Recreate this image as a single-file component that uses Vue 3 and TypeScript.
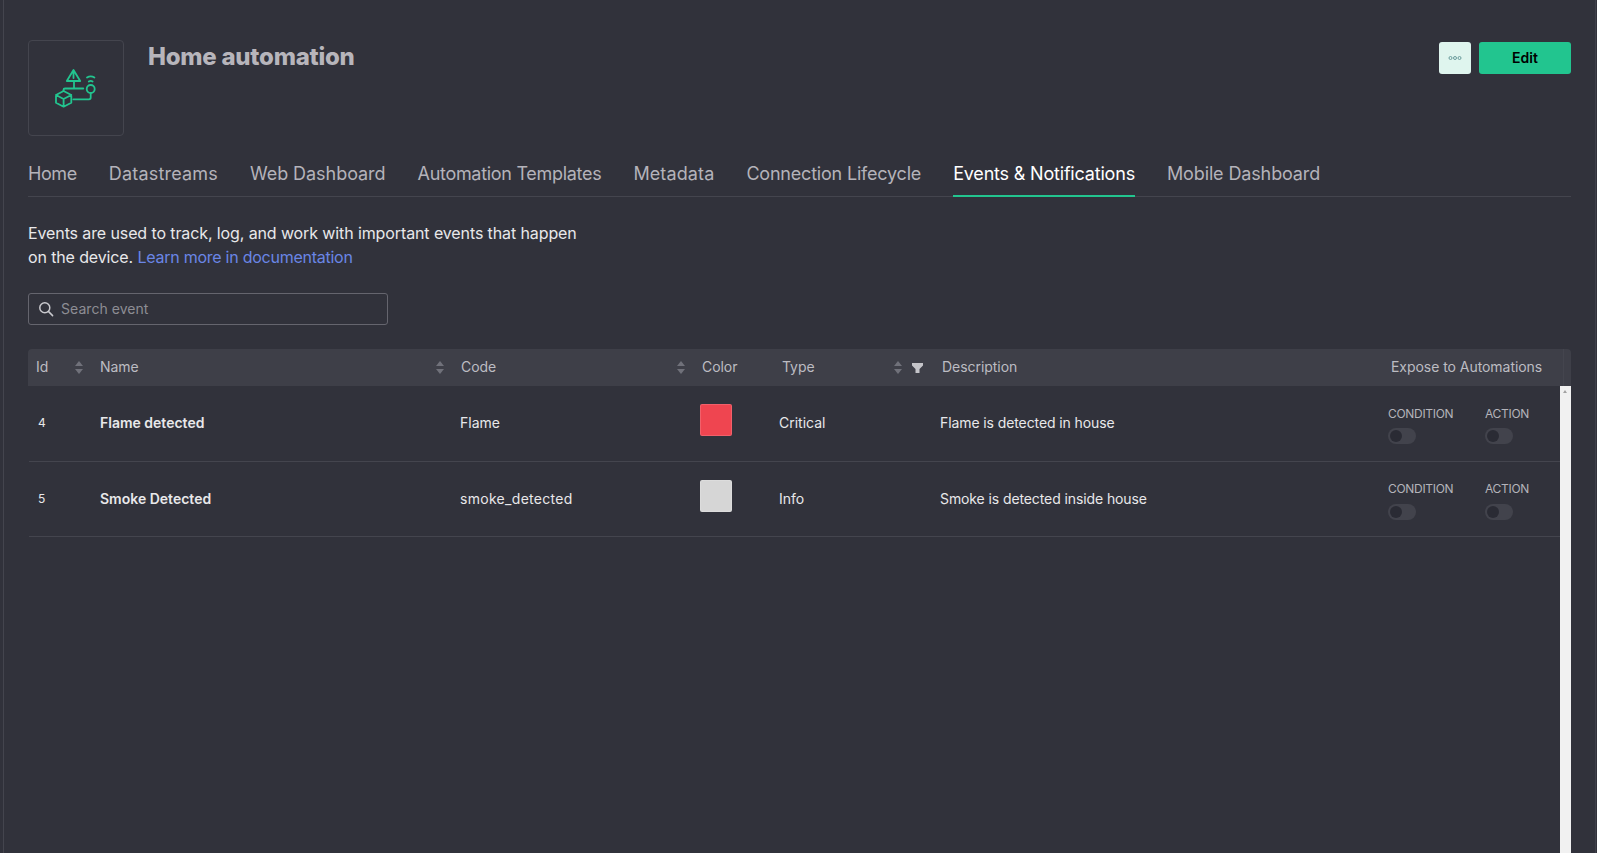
<script setup lang="ts">
interface EventRow {
  id: number
  name: string
  code: string
  codeSpacing: number
  color: string
  type: string
  description: string
}

interface Tab {
  label: string
  spacing: number
}

const tabs: Tab[] = [
  { label: 'Home', spacing: -0.4 },
  { label: 'Datastreams', spacing: 0.18 },
  { label: 'Web Dashboard', spacing: -0.05 },
  { label: 'Automation Templates', spacing: -0.3 },
  { label: 'Metadata', spacing: 0.12 },
  { label: 'Connection Lifecycle', spacing: -0.2 },
  { label: 'Events & Notifications', spacing: -0.19 },
  { label: 'Mobile Dashboard', spacing: -0.13 },
]

const rows: EventRow[] = [
  { id: 4, name: 'Flame detected', code: 'Flame', codeSpacing: 0, color: '#ef4550', type: 'Critical', description: 'Flame is detected in house' },
  { id: 5, name: 'Smoke Detected', code: 'smoke_detected', codeSpacing: 0.3, color: '#d6d6d6', type: 'Info', description: 'Smoke is detected inside house' },
]
</script>

<template>
  <div class="page">
    <div class="content">
      <header class="top">
        <div class="logo-box">
          <svg width="48" height="48" viewBox="0 0 48 48" fill="none" stroke="#22c58f" stroke-width="1.8" stroke-linecap="round" stroke-linejoin="round">
            <path d="M21.5 6 L14.8 17 H28.2 Z M21.5 9 V14 M22 17 V24" />
            <path d="M35 13.5 q3.7 -2.4 7.4 0 M36.8 17.5 q1.9 -1.2 3.8 0" />
            <circle cx="38.7" cy="25" r="4" />
            <path d="M31.3 24.5 H13 q-1.5 0 -1.5 1.5 V27" />
            <path d="M11.6 27 L19.3 31 V38.7 L11.6 42.7 L4 38.7 V31 Z M4 31 L11.6 35 L19.3 31 M11.6 35 V42.7" />
            <path d="M21.3 35.3 H37 q1.7 0 1.7 -1.7 V29" />
          </svg>
        </div>
        <h1 class="title">Home automation</h1>
        <div class="actions">
          <button class="btn-more" type="button">
            <svg width="14" height="4" viewBox="0 0 14 4" fill="none" stroke="#6b9c9c" stroke-width="1">
              <circle cx="2.5" cy="2" r="1.5" />
              <circle cx="7" cy="2" r="1.5" />
              <circle cx="11.5" cy="2" r="1.5" />
            </svg>
          </button>
          <button class="btn-edit" type="button">Edit</button>
        </div>
      </header>

      <nav class="tabs">
        <span
          v-for="tab in tabs"
          :key="tab.label"
          class="tab"
          :class="{ active: tab.label === 'Events & Notifications' }"
          :style="{ letterSpacing: tab.spacing + 'px' }"
        >{{ tab.label }}</span>
      </nav>

      <p class="intro">
        <span class="line-one">Events are used to track, log, and work with important events that happen</span><br />
        <span class="line-two">on the device. </span><a class="link">Learn more in documentation</a>
      </p>

      <div class="search">
        <svg width="16" height="16" viewBox="0 0 16 16" fill="none" stroke="#c9c9ce" stroke-width="1.5" stroke-linecap="round">
          <circle cx="6.8" cy="6.8" r="5" />
          <path d="M10.6 10.6 L14.6 14.6" />
        </svg>
        <span class="placeholder">Search event</span>
      </div>

      <div class="table">
        <div class="thead">
          <div class="th th-sort"><span>Id</span><i class="sort" /></div>
          <div class="th th-sort"><span>Name</span><i class="sort" /></div>
          <div class="th th-sort"><span>Code</span><i class="sort" /></div>
          <div class="th"><span>Color</span></div>
          <div class="th th-sort">
            <span>Type</span>
            <span class="type-icons">
              <i class="sort" />
              <svg class="filter" width="11" height="10" viewBox="0 0 11 10" fill="#c4c4c9"><path d="M0 0 H11 V2.5 L7.5 6 V10 H3.5 V6 L0 2.5 Z" /></svg>
            </span>
          </div>
          <div class="th"><span>Description</span></div>
          <div class="th th-last"><span>Expose to Automations</span></div>
          <div class="th-gap" />
        </div>

        <div class="tbody">
          <div class="rows">
            <div v-for="row in rows" :key="row.id" class="tr">
              <div class="td td-id">{{ row.id }}</div>
              <div class="td td-name">{{ row.name }}</div>
              <div class="td" :style="{ letterSpacing: row.codeSpacing + 'px' }">{{ row.code }}</div>
              <div class="td td-color"><span class="swatch" :style="{ background: row.color }" /></div>
              <div class="td">{{ row.type }}</div>
              <div class="td td-desc">{{ row.description }}</div>
              <div class="td-expose">
                <div class="expose-item">
                  <span class="expose-label">CONDITION</span>
                  <span class="toggle"><span class="knob" /></span>
                </div>
                <div class="expose-item">
                  <span class="expose-label">ACTION</span>
                  <span class="toggle"><span class="knob" /></span>
                </div>
              </div>
            </div>
          </div>
          <div class="scrollbar"><span class="arrow" /></div>
        </div>
      </div>
    </div>
  </div>
</template>

<style>
html,
body {
  margin: 0;
  background: #31323b;
  overflow: hidden;
}
</style>

<style scoped>
.page {
  height: 853px;
  box-sizing: border-box;
  overflow: hidden;
  background: #31323b;
  font-family: Inter, "Liberation Sans", sans-serif;
  color: #e8e8ea;
  padding: 40px 24px 0 24px;
  border-left: 1px solid #44454e;
  border-right: 1px solid #3f404a;
  margin: 0 1px 0 3px;
  display: flex;
  flex-direction: column;
}

.content {
  flex: 1;
  min-height: 0;
  display: flex;
  flex-direction: column;
}

.top {
  display: flex;
  align-items: flex-start;
}

.logo-box {
  width: 96px;
  height: 96px;
  box-sizing: border-box;
  border: 1px solid #44454e;
  border-radius: 4px;
  display: flex;
  align-items: center;
  justify-content: center;
}

.title {
  margin: 1px 0 0 24px;
  font-size: 24px;
  line-height: 32px;
  font-weight: 800;
  letter-spacing: -0.25px;
  color: #b7b5bb;
}

.actions {
  margin-left: auto;
  margin-top: 2px;
  display: flex;
  gap: 8px;
}

.btn-more,
.btn-edit {
  height: 32px;
  border: 0;
  border-radius: 3px;
  padding: 0;
  font-family: inherit;
  display: flex;
  align-items: center;
  justify-content: center;
}

.btn-more {
  width: 32px;
  background: #dff5ee;
}

.btn-edit {
  width: 92px;
  background: #22c58f;
  color: #000;
  font-size: 14px;
  font-weight: 600;
  padding-bottom: 1px;
}

.tabs {
  margin-top: 22px;
  display: flex;
  gap: 32px;
  border-bottom: 1px solid #44454e;
  height: 38px;
}

.tab {
  font-size: 18px;
  line-height: 32px;
  color: #b4b3ba;
  height: 39px;
  box-sizing: border-box;
  white-space: nowrap;
}

.tab.active {
  color: #fff;
  border-bottom: 2px solid #22c58f;
}

.intro {
  margin: 24px 0 0;
  font-size: 16px;
  line-height: 24px;
  color: #e8e8ea;
}

.line-one {
  letter-spacing: -0.11px;
}

.line-two {
  letter-spacing: -0.13px;
}

.link {
  color: #6a86e6;
  letter-spacing: -0.25px;
}

.search {
  margin-top: 24px;
  width: 360px;
  height: 32px;
  box-sizing: border-box;
  border: 1px solid #65656e;
  border-radius: 3px;
  display: flex;
  align-items: center;
  gap: 7px;
  padding-left: 9px;
}

.placeholder {
  font-size: 14px;
  color: #8d8d94;
  padding-bottom: 2px;
  letter-spacing: 0.05px;
}

.table {
  margin-top: 24px;
  flex: 1;
  min-height: 0;
  display: flex;
  flex-direction: column;
}

.thead {
  height: 37px;
  flex: none;
  background: #3e3f48;
  border-radius: 4px 4px 0 0;
  display: grid;
  grid-template-columns: 64px 361px 241px 80px 160px 1fr 180px 8px;
  font-size: 14px;
  letter-spacing: -0.05px;
  color: #bcbcc2;
}

.th {
  display: flex;
  align-items: center;
  padding: 0 8px 2px;
  min-width: 0;
}

.th-sort {
  justify-content: space-between;
}

.th-last {
  white-space: nowrap;
  padding-right: 0;
}

.th-gap {
  border-left: 1px solid #44454e;
}

.type-icons {
  display: flex;
  align-items: center;
  gap: 10px;
  margin-right: 3px;
}

.filter {
  margin-top: 2px;
}

.sort {
  width: 8px;
  height: 13px;
  position: relative;
  display: block;
  margin: 2px 1px 0 0;
}

.type-icons .sort {
  margin-right: 0;
}

.sort::before,
.sort::after {
  content: "";
  position: absolute;
  left: 0;
  border-left: 4px solid transparent;
  border-right: 4px solid transparent;
}

.sort::before {
  top: 0;
  border-bottom: 5.5px solid #70717a;
}

.sort::after {
  bottom: 0;
  border-top: 5.5px solid #70717a;
}

.tbody {
  flex: 1;
  min-height: 0;
  display: flex;
}

.rows {
  flex: 1;
  min-width: 0;
}

.tr {
  height: 76px;
  box-sizing: border-box;
  padding-bottom: 3px;
  border-bottom: 1px solid #44454e;
  margin-left: 1px;
  display: grid;
  grid-template-columns: 63px 360px 241px 78px 161px 1fr 172px;
  align-items: center;
  font-size: 14px;
  color: #e8e8ea;
}

.tr:last-child {
  height: 75px;
  padding-bottom: 2px;
}

.td {
  padding: 0 8px;
  white-space: nowrap;
}

.td-id {
  font-size: 12px;
  padding-left: 9px;
}

.td-name {
  font-weight: 600;
}

.td-desc {
  letter-spacing: -0.1px;
}

.td-color {
  padding-left: 7px;
  padding-bottom: 4px;
}

.swatch {
  display: block;
  width: 32px;
  height: 32px;
  box-sizing: border-box;
  border-radius: 2px;
  border: 1px solid rgba(255, 255, 255, 0.15);
}

.td-expose {
  display: grid;
  grid-template-columns: 97px 1fr;
  align-self: start;
  padding-top: 19px;
}

.tr:first-child .td-expose {
  padding-top: 20px;
}

.tr:first-child .expose-item {
  gap: 6px;
}

.expose-item {
  display: flex;
  flex-direction: column;
  gap: 7px;
}

.expose-label {
  font-size: 12px;
  line-height: 16px;
  color: #b4b4ba;
  letter-spacing: -0.3px;
}

.toggle {
  width: 28px;
  height: 16px;
  background: #42434c;
  border-radius: 8px;
  display: block;
  position: relative;
}

.knob {
  position: absolute;
  left: 2px;
  top: 2px;
  width: 12px;
  height: 12px;
  background: #2a2b34;
  border-radius: 50%;
}

.scrollbar {
  width: 11px;
  flex: none;
  background: #f1f1f1;
  position: relative;
}

.arrow {
  position: absolute;
  top: 4px;
  left: 3px;
  border-left: 2.5px solid transparent;
  border-right: 2.5px solid transparent;
  border-bottom: 3px solid #a3a3a3;
}
</style>
